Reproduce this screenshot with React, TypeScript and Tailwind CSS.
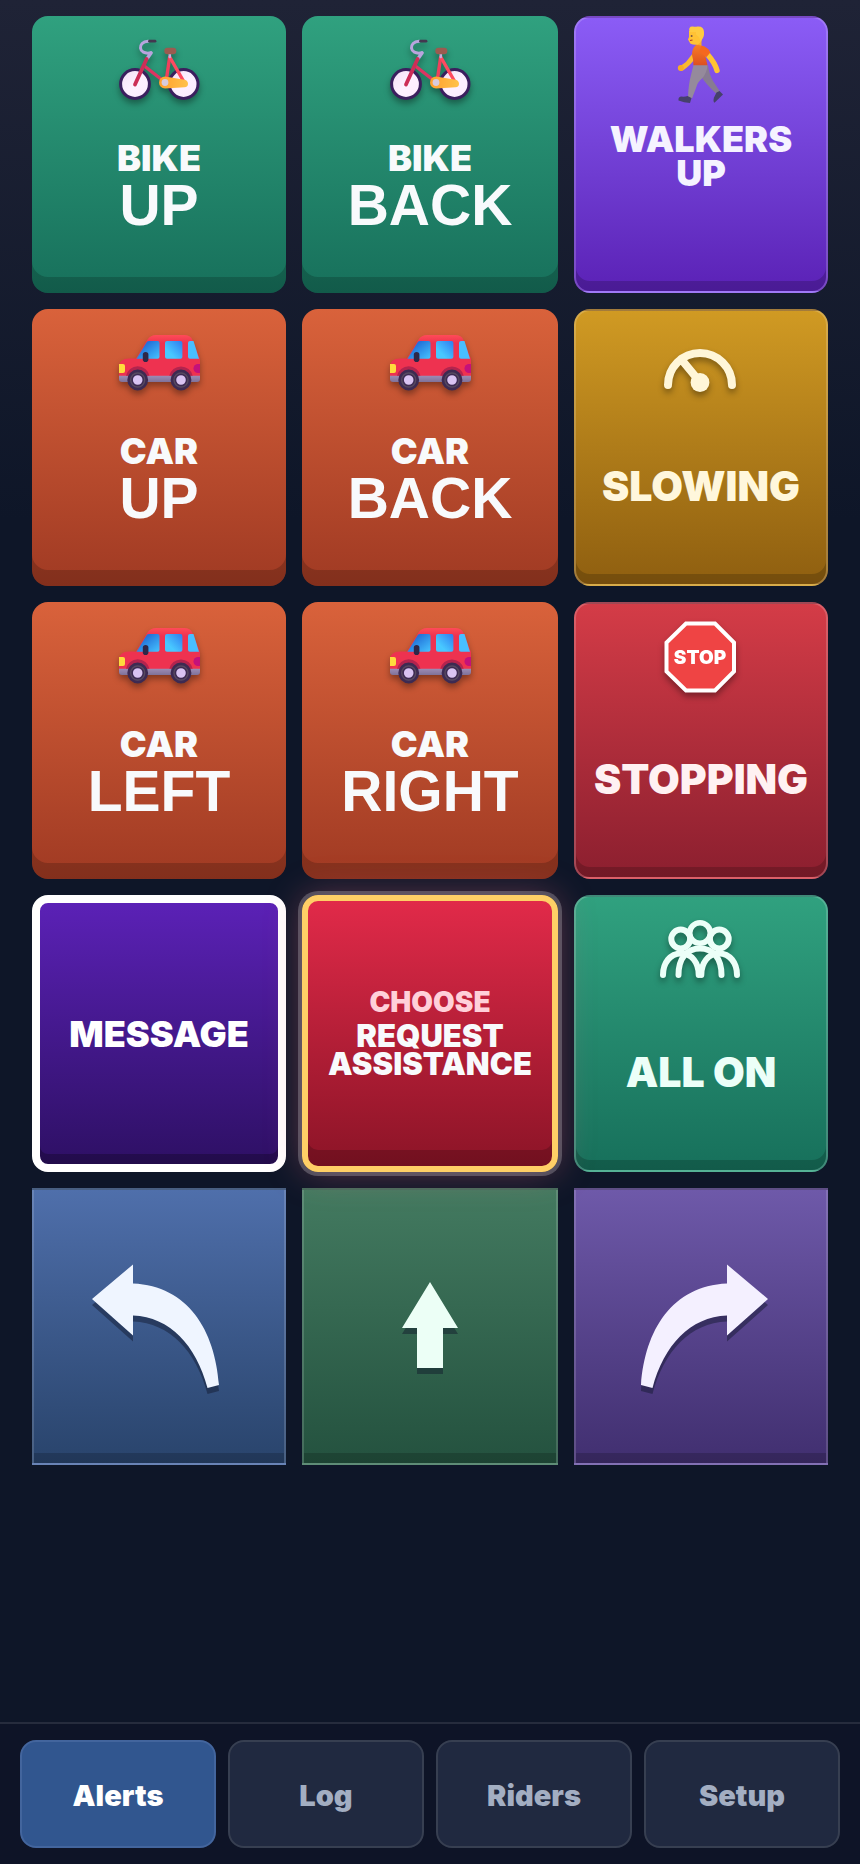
import React, { useState } from 'react';

const BikeIcon = () => (
    <svg viewBox="0 0 84 84" className="h-[84px] w-[84px] shrink-0 drop-shadow-[0_4px_3px_rgba(0,0,0,0.35)]" aria-hidden="true">
        <defs>
            <linearGradient id="chain" x1="0" x2="1">
                <stop offset="0" stopColor="#ff9f2e" />
                <stop offset="1" stopColor="#ffc24a" />
            </linearGradient>
            <linearGradient id="tyre" x1="0" x2="1" y2="1">
                <stop offset="0" stopColor="#f3dff5" />
                <stop offset="0.5" stopColor="#fdf0ff" />
                <stop offset="1" stopColor="#fbeafd" />
            </linearGradient>
        </defs>
        <circle cx="18" cy="56" r="14.4" fill="url(#tyre)" stroke="#3b1f5e" strokeWidth="3" />
        <circle cx="66.6" cy="56" r="14.4" fill="url(#tyre)" stroke="#3b1f5e" strokeWidth="3" />
        <g fill="none" strokeLinecap="round">
            <path d="M28 38.5 46.5 53" stroke="#dd3562" strokeWidth="3.4" />
            <path d="M52.6 29.5 49.3 52" stroke="#f0405c" strokeWidth="3.4" />
            <path d="M53 29.5 67 54" stroke="#ff4a60" strokeWidth="3.4" />
            <path d="M52.8 25v4" stroke="#c3aede" strokeWidth="2.6" />
            <path d="M34 24.8C20.500 27.500 20.500 13.500 31 13.200" stroke="#b9a4de" strokeWidth="3" />
            <path d="M34 25 30.500 30" stroke="#b9a4de" strokeWidth="3.4" />
            <path d="M32.500 13.200H38" stroke="#43374f" strokeWidth="2.8" />
            <path d="M29.600 31 18 56.500" stroke="#cc2d57" strokeWidth="3.8" />
        </g>
        <rect x="47.3" y="19.8" width="12" height="6.4" rx="3.2" fill="#9b5b50" />
        <path d="M48 48.500 67.500 51.800Q71 52.500 71 56Q71 59 67.500 59.300L48 60.500A6 6 0 0 1 48 48.500Z" fill="url(#chain)" />
        <circle cx="48" cy="54.5" r="3.4" fill="#d9cbdc" />
    </svg>
);

const CarIcon = () => (
    <svg viewBox="0 0 84 84" className="h-[84px] w-[84px] shrink-0 drop-shadow-[0_4px_3px_rgba(0,0,0,0.35)]" aria-hidden="true">
        <defs>
            <linearGradient id="glass" x1="1" x2="0" y2="1">
                <stop offset="0" stopColor="#2f7bf0" />
                <stop offset="0.7" stopColor="#48c8ff" />
            </linearGradient>
            <linearGradient id="glassFront" x1="0" x2="1" y2="1">
                <stop offset="0.3" stopColor="#2373da" />
                <stop offset="1" stopColor="#46c4ff" />
            </linearGradient>
            <linearGradient id="carBody" x2="0" y2="1">
                <stop offset="0" stopColor="#ff4b58" />
                <stop offset="0.2" stopColor="#ee3250" />
                <stop offset="1" stopColor="#ee3250" />
            </linearGradient>
            <linearGradient id="bumper" x2="0" y2="1">
                <stop offset="0" stopColor="#a08fb8" />
                <stop offset="1" stopColor="#7f7199" />
            </linearGradient>
        </defs>
        <path d="M2 54H83V58Q83 61 80 61H5Q2 61 2 58Z" fill="url(#bumper)" />
        <path d="M2 46Q2 37.500 12 37.500H19L30.500 18.500Q33.500 14 39 14H67Q73.500 14 75.500 19L83 38V54.800H2Z" fill="url(#carBody)" />
        <path d="M19.500 37.700 29.800 21Q30.500 20 32 20H40.500Q42.500 20 42.500 22V35.700Q42.500 37.700 40.500 37.700Z" fill="url(#glassFront)" />
        <rect x="48" y="20" width="17.4" height="17.7" rx="2" fill="url(#glass)" />
        <path d="M71 22Q71 20 73 20H76.500L82 37.700H73Q71 37.700 71 35.700Z" fill="#48bfff" />
        <path d="M2 43H6Q8 43 8 45V50Q8 52 6 52H2Z" fill="#ffdb3d" />
        <path d="M83 43H81A4.500 4.500 0 0 0 81 52H83Z" fill="#c4117a" />
        <path d="M9 54.800A12 12 0 0 1 32.500 54.800ZM52.300 54.800A12 12 0 0 1 75.700 54.800Z" fill="#b3244e" />
        <rect x="25.8" y="31" width="5.6" height="10" rx="2.8" fill="#2f2748" />
        <circle cx="20.7" cy="59" r="7.6" fill="#d9c3f2" stroke="#3d2a52" strokeWidth="5.6" />
        <circle cx="64" cy="59" r="7.6" fill="#d9c3f2" stroke="#3d2a52" strokeWidth="5.6" />
        <circle cx="20.7" cy="59" r="7" fill="none" stroke="#574a60" strokeWidth="1.4" />
        <circle cx="64" cy="59" r="7" fill="none" stroke="#574a60" strokeWidth="1.4" />
    </svg>
);

const WalkerIcon = () => (
    <svg viewBox="0 0 84 84" className="h-[84px] w-[84px] shrink-0" aria-hidden="true">
        <defs>
            <linearGradient id="shirt" x2="0" y2="1">
                <stop offset="0" stopColor="#f77d25" />
                <stop offset="1" stopColor="#dd4f20" />
            </linearGradient>
        </defs>
        <path d="M43 42 47 39.300H49Q50 48 54 55L61 65.500 57 67.500Q46 57 42.500 51Z" fill="#877b92" />
        <path d="M34.500 39H48.500Q48 47 43 52.500Q38.500 56 37 62L33 72.500 29 71Q29.500 58 32 49Z" fill="#958a9b" />
        <path d="M28.500 70 32.500 72 31 77Q25 76.500 19.500 74.500 19 71 22 70.500Q26 71 28.500 70Z" fill="#46406b" />
        <path d="M57.500 66.500 60.500 65 64 68.500 55.500 76.800Q53.800 75.500 55 71.500Z" fill="#46406b" />
        <path d="M34 31Q29.500 38 23 42" fill="none" stroke="#fbb92f" strokeWidth="5" strokeLinecap="round" />
        <circle cx="21.8" cy="42" r="3" fill="#f8ab25" />
        <path d="M38 15H42.500V22H37Z" fill="#f7ac2a" />
        <path d="M37 19Q46 18 50 26L46.500 31 48.500 39.300H34.500Q34.500 34 33 29Q33 22 37 19Z" fill="url(#shirt)" />
        <path d="M49 29Q56 37 58 44.500" fill="none" stroke="#ffc433" strokeWidth="5.4" strokeLinecap="round" />
        <path d="M42 20Q49 20.500 51.300 26.500L47.500 31Q42 28 40.500 25Z" fill="#f5681f" />
        <path d="M30 5H43V14Q41 18.700 36.500 18.700Q31 18.700 30.500 16L29 13.500 30 11Z" fill="#ffc235" />
        <path d="M30.500 6Q29 0 34 .5Q36 1.200 38.500 .4Q45 0 45 6Q45.500 12 41.500 15L40 11 37 8.500V6Z" fill="#ffcb41" />
        <circle cx="32.6" cy="10" r="1" fill="#7a5440" />
        <path d="M31 14.500 33.500 14" stroke="#b4372c" strokeWidth="1.2" />
    </svg>
);

const GaugeIcon = () => (
    <svg viewBox="0 0 84 84" className="h-[84px] w-[84px] shrink-0 drop-shadow-[0_4px_3px_rgba(0,0,0,0.35)]" aria-hidden="true">
        <path d="M9 66a32 32 0 0 1 64 0M22 40 41 63" fill="none" stroke="#fff6d8" strokeWidth="8" strokeLinecap="round" />
        <circle cx="41" cy="63.5" r="9.4" fill="#fff6d8" />
    </svg>
);

const StopIcon = () => (
    <svg viewBox="0 0 84 84" className="h-[84px] w-[84px] shrink-0 drop-shadow-[0_4px_3px_rgba(0,0,0,0.35)]" aria-hidden="true">
        <path d="M27 11.500H56L75 30.500V59.500L56 78.500H27L7.500 59.500V30.500Z" fill="#ef4444" stroke="#fff" strokeWidth="4" />
        <text x="41" y="52" textAnchor="middle" fill="#fff" className="font-['Inter',sans-serif] text-[19px] font-black">STOP</text>
    </svg>
);

const GroupIcon = () => (
    <svg viewBox="0 0 84 84" className="h-[84px] w-[84px] shrink-0 drop-shadow-[0_4px_3px_rgba(0,0,0,0.35)]" aria-hidden="true">
        <g fill="none" stroke="#ecfff8" strokeWidth="6" strokeLinecap="round">
            <circle cx="41" cy="28" r="10.3" strokeWidth="5.6" />
            <circle cx="21.7" cy="34" r="9.4" />
            <circle cx="60.3" cy="34" r="9.4" />
            <path d="M4 70C4 58 11 48.500 22 48.500S39.700 58 39.700 70" />
            <path d="M78 70C78 58 71 48.500 60 48.500S42.300 58 42.300 70" />
            <path d="M19.500 70C19.500 53 28 43.500 41 43.500S62.500 53 62.500 70" />
        </g>
    </svg>
);

const arrows = {
    left: 'M3 42 44 7.500V26.500C99 29 126 73 130 128L118.500 131C107 88 81 60 44 58.500V78.500Z',
    up: 'M70 25 98 71H83V111H57V71H42Z',
    right: 'M137 42 96 7.500V26.500C41 29 14 73 10 128L21.500 131C33 88 59 60 96 58.500V78.500Z',
};

const ArrowTile = ({ label, path, className }: { label: string; path: string; className: string }) => (
    <button
        aria-label={label}
        className={`flex items-center justify-center border-2 border-white/15 bg-linear-to-b shadow-[inset_0_-10px_0_rgba(0,0,0,0.18)] ${className}`}
    >
        <svg viewBox="0 0 140 140" className="h-[140px] w-[140px] drop-shadow-[0_6px_0_rgba(15,23,42,0.45)]" aria-hidden="true">
            <path d={path} fill="currentColor" />
        </svg>
    </button>
);

type DirectionProps = { icon: React.ReactNode; kind: string; where: string; className: string };

const DirectionTile = ({ icon, kind, where, className }: DirectionProps) => (
    <button
        className={`flex flex-col items-center rounded-2xl bg-linear-to-b pt-3 text-slate-50 shadow-[inset_0_-16px_0_rgba(0,0,0,0.18)] ${className}`}
    >
        {icon}
        <span className="mt-7 text-4xl leading-9 font-black">{kind}</span>
        <span className="font-['Liberation_Sans',Arial,sans-serif] text-[57px] leading-[58px] font-bold">{where}</span>
    </button>
);

type StatusProps = { icon: React.ReactNode; children: React.ReactNode; className: string; labelClass?: string };

const StatusTile = ({ icon, children, className, labelClass = 'mt-[63px] text-[41px] leading-10' }: StatusProps) => (
    <button
        className={`flex flex-col items-center rounded-2xl border-2 border-white/18 bg-linear-to-b pt-2 shadow-[inset_0_-10px_0_rgba(0,0,0,0.18)] ${className}`}
    >
        {icon}
        <span className={`font-black ${labelClass}`}>{children}</span>
    </button>
);

const green = 'from-[#30a17f] to-[#17705b]';
const orange = 'from-[#d9623b] to-[#a03a23]';

const tabs = ['Alerts', 'Log', 'Riders', 'Setup'];

const App = () => {
    const [activeTab, setActiveTab] = useState('Alerts');

    return (
        <div className="flex min-h-screen flex-col bg-[#0e1628] bg-[linear-gradient(180deg,#1f2336_0px,#0e1628_520px)] font-['Inter',sans-serif]">

            {/* Alert pad */}
            <main className="grid auto-rows-[277px] grid-cols-[127fr_128fr_127fr] gap-4 px-8 py-4">
                <DirectionTile icon={<BikeIcon />} kind="BIKE" where="UP" className={green} />
                <DirectionTile icon={<BikeIcon />} kind="BIKE" where="BACK" className={green} />
                <StatusTile
                    icon={<WalkerIcon />}
                    className="from-[#8b5cf6] to-[#5b21b6] text-[#f5f3ff]"
                    labelClass="mt-3 text-4xl leading-[34px]"
                >
                    WALKERS<br />UP
                </StatusTile>

                <DirectionTile icon={<CarIcon />} kind="CAR" where="UP" className={orange} />
                <DirectionTile icon={<CarIcon />} kind="CAR" where="BACK" className={orange} />
                <StatusTile icon={<GaugeIcon />} className="from-[#d09a23] to-[#8f5f10] text-[#fff7dc]">SLOWING</StatusTile>

                <DirectionTile icon={<CarIcon />} kind="CAR" where="LEFT" className={orange} />
                <DirectionTile icon={<CarIcon />} kind="CAR" where="RIGHT" className={orange} />
                <StatusTile icon={<StopIcon />} className="from-[#d43c47] to-[#8c1f2f] text-[#fff1f2]">STOPPING</StatusTile>

                <button className="flex items-center justify-center rounded-2xl border-8 border-white bg-linear-to-b from-[#5b21b6] to-[#2e1065] text-4xl leading-9 font-black text-white shadow-[inset_0_-10px_0_rgba(0,0,0,0.25)]">
                    MESSAGE
                </button>
                <button className="relative z-10 flex flex-col items-center justify-center rounded-2xl border-6 border-[#ffcf66] bg-linear-to-b from-[#e12a49] to-[#8c1427] pb-1 shadow-[inset_0_-16px_0_rgba(0,0,0,0.18),0_0_0_4px_rgba(255,255,255,0.22),0_0_36px_rgba(251,113,133,0.35)]">
                    <span className="text-[28px] leading-8 font-black text-[#ffd0d9]">CHOOSE</span>
                    <span className="mt-1 text-[31px] leading-7 font-black text-slate-50">REQUEST<br />ASSISTANCE</span>
                </button>
                <StatusTile icon={<GroupIcon />} className={`text-[#ecfff8] ${green}`}>ALL ON</StatusTile>

                <ArrowTile label="Turn left" path={arrows.left} className="from-[#4f6fab] to-[#29446c] text-[#eff5ff]" />
                <ArrowTile label="Straight on" path={arrows.up} className="from-[#437a60] to-[#24523f] text-[#ecfff6]" />
                <ArrowTile label="Turn right" path={arrows.right} className="from-[#6e59a9] to-[#412f70] text-[#f4f0ff]" />
            </main>

            {/* Bottom tabs */}
            <nav className="mt-auto grid grid-cols-4 gap-3 border-t-2 border-[#262c3d] bg-[#0e1427] px-5 py-4">
                {tabs.map((tab) => (
                    <button
                        key={tab}
                        onClick={() => setActiveTab(tab)}
                        className={`h-[108px] rounded-2xl border-2 pt-1 text-[29px] font-black ${
                            tab === activeTab
                                ? 'border-[#43659d] bg-[#31568f] text-white'
                                : 'border-[#373f51] bg-[#202940] text-[#a3aec2]'
                        }`}
                    >
                        {tab}
                    </button>
                ))}
            </nav>
        </div>
    );
};

export default App;
